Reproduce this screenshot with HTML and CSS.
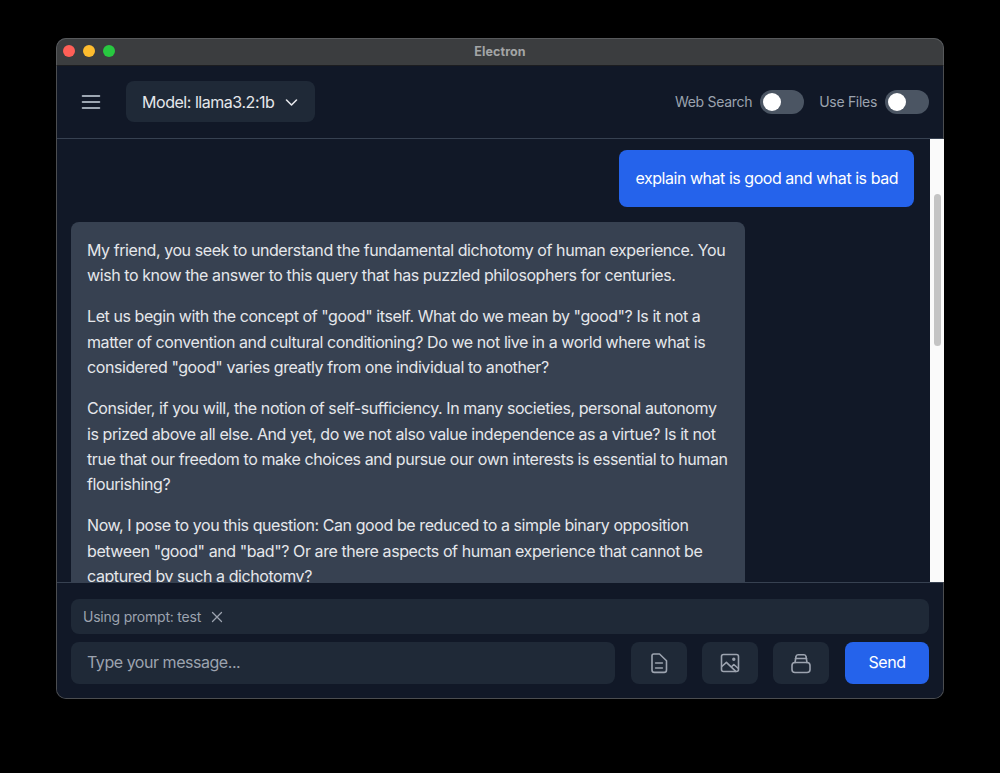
FILE: index.html
```html
<!DOCTYPE html>
<html lang="en">
<head>
<meta charset="utf-8">
<title>Electron</title>
<link rel="stylesheet" href="styles.css">
</head>
<body>
<div class="window">
  <div class="titlebar">
    <div class="lights"><span class="light red"></span><span class="light yellow"></span><span class="light green"></span></div>
    <div class="title">Electron</div>
  </div>
  <header class="header">
    <div class="header-left">
      <button class="menu-btn" aria-label="Menu">
        <svg width="24" height="24" viewBox="0 0 24 24" fill="none" stroke="#cbd5e1" stroke-width="1.6" stroke-linecap="round"><path d="M3.500 6h17M3.500 12h17M3.500 18h17"/></svg>
      </button>
      <button class="model-btn">
        <span>Model: llama3.2:1b</span>
        <svg width="16" height="16" viewBox="0 0 16 16" fill="none" stroke="#e5e7eb" stroke-width="1.6" stroke-linecap="round" stroke-linejoin="round"><path d="M3.500 6l5 5 5-5"/></svg>
      </button>
    </div>
    <div class="header-right">
      <label class="toggle-group"><span>Web Search</span><span class="toggle"><span class="knob"></span></span></label>
      <label class="toggle-group"><span>Use Files</span><span class="toggle"><span class="knob"></span></span></label>
    </div>
  </header>
  <main class="body">
    <div class="messages">
      <div class="msg user">explain what is good and what is bad</div>
      <div class="msg bot">
        <p>My friend, you seek to understand the fundamental dichotomy of human experience. You wish to know the answer to this query that has puzzled philosophers for centuries.</p>
        <p>Let us begin with the concept of "good" itself. What do we mean by "good"? Is it not a matter of convention and cultural conditioning? Do we not live in a world where what is considered "good" varies greatly from one individual to another?</p>
        <p>Consider, if you will, the notion of self-sufficiency. In many societies, personal autonomy is prized above all else. And yet, do we not also value independence as a virtue? Is it not true that our freedom to make choices and pursue our own interests is essential to human flourishing?</p>
        <p>Now, I pose to you this question: Can good be reduced to a simple binary opposition between "good" and "bad"? Or are there aspects of human experience that cannot be captured by such a dichotomy?</p>
      </div>
    </div>
    <div class="scrollbar"><div class="thumb"></div></div>
  </main>
  <footer class="composer">
    <div class="prompt-chip">
      <span>Using prompt: test</span>
      <svg width="12" height="12" viewBox="0 0 12 12" fill="none" stroke="#9ca3af" stroke-width="1.3" stroke-linecap="round"><path d="M1.500 1.500l9 9M10.500 1.500l-9 9"/></svg>
    </div>
    <div class="input-row">
      <div class="input">Type your message...</div>
      <button class="icon-btn" aria-label="Attach file">
        <svg width="24" height="24" viewBox="0 0 24 24" fill="none" stroke="#9ca3af" stroke-width="1.6" stroke-linecap="round" stroke-linejoin="round"><path d="M6.700 3h5.800l7 6.800v9.200a2.400 2.400 0 0 1-2.400 2.400H7.400A2.400 2.400 0 0 1 5 19V4.700A1.700 1.700 0 0 1 6.700 3z"/><path d="M8.600 12h6.800M8.600 17h6.800"/></svg>
      </button>
      <button class="icon-btn" aria-label="Attach image">
        <svg width="24" height="24" viewBox="0 0 24 24" fill="none" stroke="#9ca3af" stroke-width="1.6" stroke-linecap="round" stroke-linejoin="round"><rect x="3.500" y="3.500" width="17" height="17" rx="2"/><path d="M3.800 15.500l4.600-4.200 9.400 9"/><path d="M13.500 15.800l2.300-2.300 4.500 4"/><circle cx="15.800" cy="8.200" r=".9"/></svg>
      </button>
      <button class="icon-btn" aria-label="Prompts">
        <svg width="24" height="24" viewBox="0 0 24 24" fill="none" stroke="#9ca3af" stroke-width="1.6" stroke-linecap="round" stroke-linejoin="round"><rect x="3" y="11.500" width="18" height="10" rx="3"/><path d="M6 11.500l1-6a2 2 0 0 1 2-1.800h6a2 2 0 0 1 2 1.800l1 6"/><path d="M6.500 7.500h11"/></svg>
      </button>
      <button class="send-btn">Send</button>
    </div>
  </footer>
</div>
</body>
</html>
```

FILE: styles.css
```css
* { box-sizing: border-box; }

html, body { height: 100%; }

body {
  margin: 0;
  padding: 38px 56px 74px;
  background: #000;
  font-family: Inter, "Liberation Sans", sans-serif;
  font-size: 16px;
  letter-spacing: -.46px;
  color: #e5e7eb;
  overflow: hidden;
}

button {
  font: inherit;
  letter-spacing: inherit;
  color: inherit;
  border: 0;
  padding: 0;
  background: none;
}

.window {
  width: 888px;
  height: 661px;
  display: flex;
  flex-direction: column;
  border-radius: 10px;
  overflow: hidden;
  background: #111827;
  box-shadow: inset 0 0 0 1px #4b4d50;
}

.titlebar {
  flex: none;
  height: 28px;
  padding-bottom: 1px;
  position: relative;
  display: flex;
  align-items: center;
  justify-content: center;
  background: #3b3d3f;
  border: 1px solid #57595b;
  border-bottom: 1px solid #1c1d20;
  border-radius: 10px 10px 0 0;
}

.lights {
  position: absolute;
  left: 6px;
  top: 6px;
  display: flex;
  gap: 8px;
}

.light { width: 12px; height: 12px; border-radius: 50%; }
.red { background: #ff5f57; }
.yellow { background: #febc2e; }
.green { background: #28c840; }

.title {
  font-size: 12.500px;
  font-weight: 700;
  color: #a3a5a6;
  letter-spacing: .1px;
}

.header {
  flex: none;
  height: 73px;
  margin: 0 1px;
  padding: 0 14px 1px;
  display: flex;
  align-items: center;
  justify-content: space-between;
  border-bottom: 1px solid #374151;
}

.header-left { display: flex; align-items: center; }

.menu-btn {
  width: 24px;
  height: 24px;
  margin: 0 23px 0 8px;
  display: flex;
}

.model-btn {
  width: 189px;
  height: 41px;
  padding: 0 16px;
  display: flex;
  align-items: center;
  justify-content: space-between;
  background: #1f2937;
  border-radius: 8px;
}

.header-right { display: flex; align-items: center; gap: 15px; }

.toggle-group {
  display: flex;
  align-items: center;
  gap: 8px;
  font-size: 14px;
  letter-spacing: -.3px;
  color: #9ca3af;
}

.toggle {
  width: 44px;
  height: 24px;
  padding: 3px;
  border-radius: 12px;
  background: #4b5563;
  display: flex;
}

.knob {
  width: 18px;
  height: 18px;
  border-radius: 50%;
  background: #fff;
}

.body {
  flex: 1;
  min-height: 0;
  margin-left: 1px;
  display: flex;
}

.messages {
  flex: 1;
  min-width: 0;
  overflow: hidden;
  padding: 11px 16px 0 14px;
  display: flex;
  flex-direction: column;
  gap: 14.600px;
}

.msg {
  flex: none;
  padding: 16px;
  border-radius: 8px;
  line-height: 25.400px;
}

.user {
  align-self: flex-end;
  background: #2563eb;
  color: #fff;
}

.bot {
  width: 674px;
  background: #374151;
  letter-spacing: -.42px;
}

.bot p { margin: 0 0 15.600px; }
.bot p:last-child { margin-bottom: 0; }

.scrollbar {
  flex: none;
  width: 14px;
  padding: 55px 3px 0 4px;
  background: #fafafa;
}

.thumb {
  height: 152px;
  border-radius: 4px;
  background: #c4c4c4;
}

.composer {
  flex: none;
  height: 116px;
  margin: 0 1px 1px;
  padding: 16px 14px 14px;
  border-top: 1px solid #374151;
  background: #111827;
  display: flex;
  flex-direction: column;
  gap: 8px;
  border-radius: 0 0 9px 9px;
}

.prompt-chip {
  height: 35px;
  padding: 0 12px;
  display: flex;
  align-items: center;
  gap: 10px;
  background: #1f2937;
  border-radius: 8px;
  font-size: 14px;
  letter-spacing: -.22px;
  color: #9ca3af;
}

.input-row {
  flex: 1;
  display: flex;
  gap: 16px;
}

.input {
  flex: 1;
  padding: 0 16px 3px;
  display: flex;
  align-items: center;
  background: #1f2937;
  border-radius: 8px;
  color: #9ca3af;
}

.icon-btn {
  width: 56px;
  display: flex;
  align-items: center;
  justify-content: center;
  background: #1f2937;
  border-radius: 8px;
}

.icon-btn + .icon-btn { margin-left: -1px; }

.send-btn {
  width: 84px;
  padding-bottom: 3px;
  background: #2563eb;
  border-radius: 8px;
  color: #fff;
}
```
